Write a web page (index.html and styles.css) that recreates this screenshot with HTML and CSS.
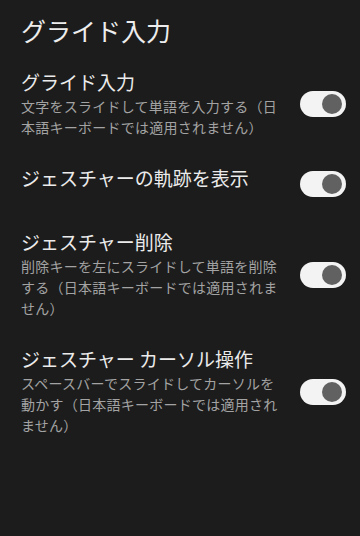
FILE: index.html
```html
<!DOCTYPE html>
<html lang="ja">
<head>
<meta charset="utf-8">
<link rel="stylesheet" href="styles.css">
</head>
<body>
<div class="page">
  <h1 class="header">グライド入力</h1>
  <div class="list">
    <div class="row">
      <div class="text">
        <div class="title">グライド入力</div>
        <div class="summary">文字をスライドして単語を入力する（日本語キーボードでは適用されません）</div>
      </div>
      <div class="switch"><span class="thumb"></span></div>
    </div>
    <div class="row">
      <div class="text">
        <div class="title">ジェスチャーの軌跡を表示</div>
      </div>
      <div class="switch"><span class="thumb"></span></div>
    </div>
    <div class="row">
      <div class="text">
        <div class="title">ジェスチャー削除</div>
        <div class="summary">削除キーを左にスライドして単語を削除する（日本語キーボードでは適用されません）</div>
      </div>
      <div class="switch"><span class="thumb"></span></div>
    </div>
    <div class="row">
      <div class="text">
        <div class="title">ジェスチャー カーソル操作</div>
        <div class="summary">スペースバーでスライドしてカーソルを動かす（日本語キーボードでは適用されません）</div>
      </div>
      <div class="switch"><span class="thumb"></span></div>
    </div>
  </div>
</div>
</body>
</html>
```
FILE: styles.css
```css
html, body {
  margin: 0;
  padding: 0;
  background: #1c1c1c;
}
body {
  width: 360px;
  height: 536px;
  overflow: hidden;
  font-family: "Noto Sans CJK JP", "Noto Sans", sans-serif;
  color: #e6e6e6;
}
.page {
  padding-top: 14px;
}
.header {
  margin: 0 0 10px 0;
  padding-left: 21px;
  font-size: 25px;
  line-height: 32px;
  font-weight: 400;
  color: #ededed;
}
.list {
  display: flex;
  flex-direction: column;
}
.row {
  display: flex;
  align-items: center;
  min-height: 64px;
  box-sizing: border-box;
  padding: 14px 14px 14px 21px;
}
.text {
  flex: 1;
  align-self: flex-start;
  min-width: 0;
}
.title {
  font-size: 19px;
  line-height: 24px;
  color: #ebebeb;
}
.summary {
  margin-top: 2px;
  font-size: 14px;
  line-height: 21px;
  letter-spacing: 0.25px;
  color: #a3a3a3;
  line-break: strict;
}
.switch {
  position: relative;
  flex: none;
  width: 46px;
  height: 26px;
  margin-left: 19px;
  border-radius: 13px;
  background: #f3f3f3;
}
.thumb {
  position: absolute;
  top: 3px;
  right: 4px;
  width: 20px;
  height: 20px;
  border-radius: 50%;
  background: #616161;
}
```
